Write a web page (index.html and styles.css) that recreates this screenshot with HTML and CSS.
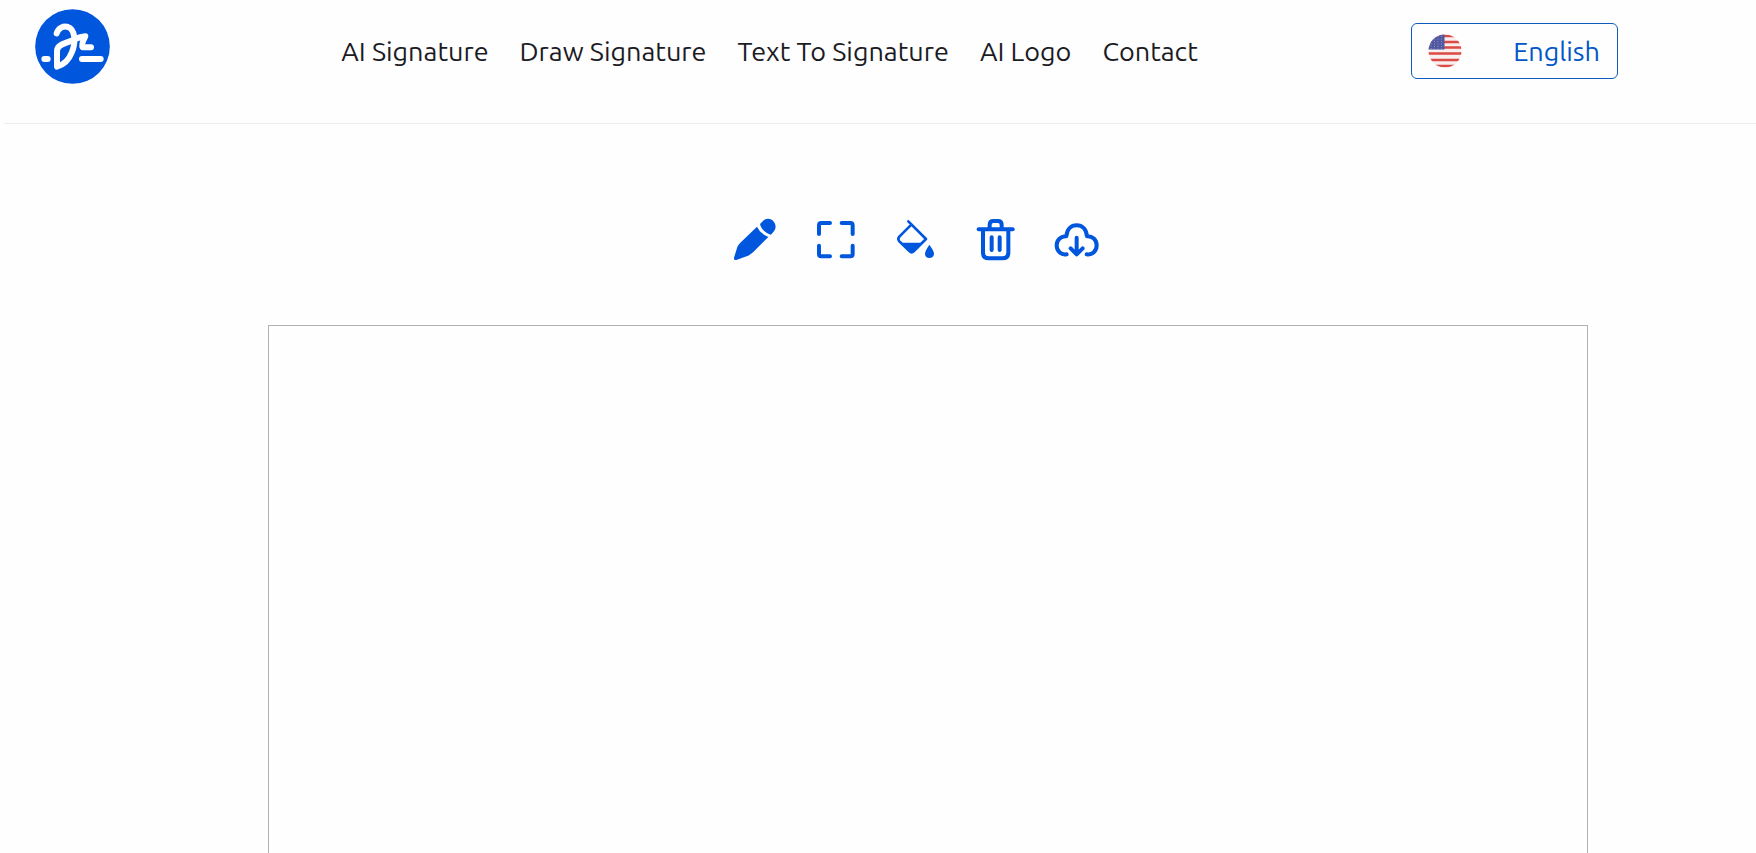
FILE: index.html
```
<!DOCTYPE html>
<html lang="en">
<head>
    <meta charset="UTF-8">
    <meta name="viewport" content="width=device-width, initial-scale=1.0">
    <title>Draw Signature</title>
    <link rel="stylesheet" href="styles.css">
</head>
<body>

    <header class="header">
        <a class="logo" href="#" aria-label="Home">
            <svg viewBox="105 25 225 225">
                <circle cx="217.5" cy="137.5" r="112" fill="#0057de"/>
                <g fill="none" stroke="#fff" stroke-width="18" stroke-linecap="round" stroke-linejoin="round">
                    <path d="M170 98 C175 82 190 75 204 79 C224 86 229 121 216 154 C207 177 190 193 171 198 L171 151 C172 132 192 130 214 120 C230 113 242 108 256 107 C247 124 244 134 248 140 H273"/>
                    <path d="M133 175 H143 M246 175 H302"/>
                </g>
            </svg>
        </a>

        <nav class="nav">
            <a href="#">AI Signature</a>
            <a href="#">Draw Signature</a>
            <a href="#">Text To Signature</a>
            <a href="#">AI Logo</a>
            <a href="#">Contact</a>
        </nav>

        <button class="language" type="button">
            <svg class="flag" viewBox="0 0 34 34">
                <clipPath id="round"><circle cx="17" cy="17" r="16.5"/></clipPath>
                <g clip-path="url(#round)">
                    <rect width="34" height="34" fill="#f8eeee"/>
                    <path d="M0 2H34M0 8H34M0 13.5H34M0 19.5H34M0 26H34M0 32H34" stroke="#dc4a44" stroke-width="2.7"/>
                    <rect width="16.5" height="15.5" fill="#5058a0"/>
                    <path d="M3 4V15M6.5 2V15M10 2V15M13.5 2V15" stroke="#9297c6" stroke-width="1" stroke-dasharray="1 1.5"/>
                </g>
            </svg>
            <span>English</span>
        </button>
    </header>

    <main class="main">
        <div class="toolbar">
            <button type="button" aria-label="Pen">
                <svg viewBox="36 33 144 144">
                    <path d="M111 65 Q120 86 145 96 L99 142 Q93 148 84 152 L49 165 Q41 167 42 158 L52 126 Q55 118 61 113 Z"/>
                    <path d="M120 57 L129 48 C139 38 154 40 162 51 C169 61 168 73 160 81 L153 89 C136 84 124 73 120 57 Z"/>
                </svg>
            </button>
            <button type="button" aria-label="Full screen">
                <svg class="line" viewBox="276 33 144 144">
                    <path d="M297 87 V61 Q297 54 304 54 H330 M365 54 H391 Q398 54 398 61 V87 M398 122 V147 Q398 154 391 154 H365 M330 154 H304 Q297 154 297 147 V122"/>
                </svg>
            </button>
            <button type="button" aria-label="Fill">
                <svg viewBox="36 33 144 144">
                    <path d="M85 49 L138 102 L101 139 Q95 145 89 139 L58 109 Q52 102 58 95 L94 59" fill="none" stroke="#0057de" stroke-width="8" stroke-linecap="round" stroke-linejoin="round"/>
                    <path d="M60 113 H128 L101 140 Q95 145 89 140 Z"/>
                    <path d="M148 119 C155 129 162 138 162 146 C162 154 156 159 148 159 C140 159 135 154 135 146 C135 138 142 129 148 119 Z"/>
                </svg>
            </button>
            <button type="button" aria-label="Delete">
                <svg class="line" viewBox="276 33 144 144">
                    <path d="M296 73 H398"/>
                    <path d="M329 71 V59 Q329 48 340 48 H354 Q365 48 365 59 V71"/>
                    <path d="M309 74 V143 Q309 160 326 160 H368 Q385 160 385 143 V74"/>
                    <path d="M335 97 V135 M359 97 V135"/>
                </svg>
            </button>
            <button type="button" aria-label="Download">
                <svg class="line" viewBox="36 33 144 144">
                    <path d="M80 148 C63 151 50 138 50 121 C50 104 64 93 79 94 C81 73 93 61 110 61 C127 61 139 73 141 94 C157 93 170 104 170 121 C170 138 157 151 140 148"/>
                    <path d="M110 98 V146 M92 130 L110 148 L128 130"/>
                </svg>
            </button>
        </div>
        <canvas class="pad"></canvas>
    </main>

</body>
</html>
```

FILE: styles.css
```
* {
    box-sizing: border-box;
}
body {
    margin: 0;
    height: 100vh;
    display: flex;
    flex-direction: column;
    background-color: #fefefe;
    font-family: Ubuntu, "Noto Sans", sans-serif;
    font-size: 27px;
}
.header {
    display: flex;
    flex-shrink: 0;
    justify-content: space-between;
    align-items: flex-start;
    height: 124px;
    margin-left: 4px;
    padding: 9px 138px 0 31px;
    border-bottom: 1px solid #ececec;
}
.logo svg {
    display: block;
    width: 75px;
    height: 75px;
}
.nav {
    display: flex;
    gap: 31px;
    padding: 24px 0 0 18px;
    line-height: 36px;
}
.nav a {
    color: #1b1b24;
    text-decoration: none;
    white-space: nowrap;
}
.language {
    display: flex;
    justify-content: space-between;
    align-items: center;
    width: 207px;
    height: 56px;
    margin-top: 14px;
    padding: 0 17px 0 16px;
    border: 1px solid #0d5bbd;
    border-radius: 6px;
    background-color: #fefefe;
    color: #0057c8;
    font: inherit;
    cursor: pointer;
}
.flag {
    width: 34px;
    height: 34px;
}
.main {
    flex: 1;
    min-height: 0;
    display: flex;
    flex-direction: column;
    padding: 92px 168px 0 268px;
}
.toolbar {
    display: flex;
    justify-content: center;
    gap: 32px;
    padding-right: 24px;
    margin-bottom: 61px;
}
.toolbar button {
    width: 48px;
    height: 48px;
    padding: 0;
    border: none;
    background: none;
    cursor: pointer;
}
.toolbar svg {
    display: block;
    width: 48px;
    height: 48px;
    fill: #0057de;
}
.toolbar .line {
    fill: none;
    stroke: #0057de;
    stroke-width: 12px;
    stroke-linecap: round;
    stroke-linejoin: round;
}
.pad {
    flex: 1;
    width: 100%;
    min-height: 0;
    border: 1px solid #b2b2b2;
    border-bottom: none;
}
```
